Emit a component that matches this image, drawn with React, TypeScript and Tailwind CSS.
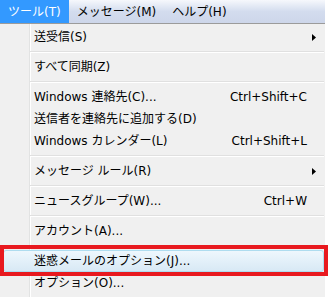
import React from "react";

type Item =
  | { type: "sep" }
  | { type: "item"; label: string; shortcut?: string; sub?: boolean; hl?: boolean };

const items: Item[] = [
  { type: "item", label: "送受信(S)", sub: true },
  { type: "sep" },
  { type: "item", label: "すべて同期(Z)" },
  { type: "sep" },
  { type: "item", label: "Windows 連絡先(C)...", shortcut: "Ctrl+Shift+C" },
  { type: "item", label: "送信者を連絡先に追加する(D)" },
  { type: "item", label: "Windows カレンダー(L)", shortcut: "Ctrl+Shift+L" },
  { type: "sep" },
  { type: "item", label: "メッセージ ルール(R)", sub: true },
  { type: "sep" },
  { type: "item", label: "ニュースグループ(W)...", shortcut: "Ctrl+W" },
  { type: "sep" },
  { type: "item", label: "アカウント(A)..." },
  { type: "sep" },
  { type: "item", label: "迷惑メールのオプション(J)...", hl: true },
  { type: "item", label: "オプション(O)..." },
];

function Arrow() {
  return (
    <svg width="4" height="7" viewBox="0 0 4 7" className="block">
      <path d="M0 0 L4 3.5 L0 7 Z" fill="#000" />
    </svg>
  );
}

export default function App() {
  return (
    <div
      className="relative w-[333px] h-[297px] bg-white overflow-hidden text-[12px] text-black"
      style={{ fontFamily: '"DejaVu Sans", "Noto Sans CJK JP", sans-serif' }}
    >
      <div className="w-[325px]">
        <div className="flex h-[24px] bg-gradient-to-b from-[#f6f8fc] via-[#d3dcee] to-[#cdd6ea] border-b border-[#9b9b9b]">
          <div className="flex items-center px-[8px] bg-[#3399ff] text-white leading-none">ツール(T)</div>
          <div className="flex items-center px-[8px] leading-none">メッセージ(M)</div>
          <div className="flex items-center px-[8px] leading-none">ヘルプ(H)</div>
        </div>
        <div className="pt-[2px] pb-[4px] bg-[linear-gradient(to_right,#f0f0f0_29px,#e2e3e3_29px,#e2e3e3_30px,#ffffff_30px,#ffffff_31px,#f0f0f0_31px)]">
          {items.map((it, i) =>
            it.type === "sep" ? (
              <div key={i} className="h-[8px] flex flex-col justify-center pl-[30px] pr-[1px]">
                <div className="h-[1px] bg-[#e0e0e0]" />
                <div className="h-[1px] bg-white" />
              </div>
            ) : it.hl ? (
              <div key={i} className="h-[22px] px-[3px] pr-[1px]">
                <div className="h-full flex items-center pl-[30px] rounded-[3px] border border-[#aedcef] bg-gradient-to-b from-[#eef7fd] to-[#d8e9f5]">
                  <span className="flex-1 leading-none">{it.label}</span>
                </div>
              </div>
            ) : (
              <div key={i} className="h-[22px] flex items-center pl-[34px]">
                <span className="flex-1 leading-none whitespace-nowrap">{it.label}</span>
                {it.shortcut && <span className="leading-none">{it.shortcut}</span>}
                <span className="w-[18px] flex justify-start pl-[5px]">{it.sub && <Arrow />}</span>
              </div>
            )
          )}
        </div>
      </div>
      <div className="absolute left-0 top-[245px] w-[328px] h-[31px] border-[4px] border-[#e8191f]" />
    </div>
  );
}
